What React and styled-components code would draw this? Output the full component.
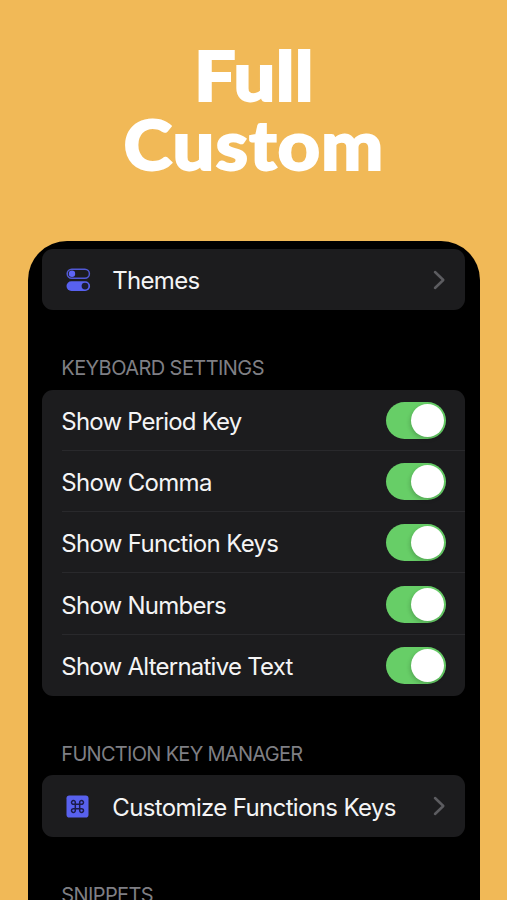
import React from "react";
import styled, { createGlobalStyle } from "styled-components";

const GlobalStyle = createGlobalStyle`
  * {
    box-sizing: border-box;
  }

  body {
    margin: 0;
    background: #f1b957;
  }
`;

const Page = styled.main`
  display: flex;
  flex-direction: column;
  align-items: center;
  height: 900px;
  overflow: hidden;

  background: #f1b957;

  font-family: Inter, "Liberation Sans", sans-serif;
`;

const HeroText = styled.h1`
  flex: none;
  height: 241px;
  margin: 0;
  padding-top: 40px;

  font-family: Lato, sans-serif;
  font-size: 69px;
  font-weight: 900;
  line-height: 69px;
  color: #ffffff;
  text-align: center;
  transform: scaleX(1.07);
  -webkit-text-stroke: 1.8px #ffffff;
`;

const HeroLine = styled.span`
  display: block;
  letter-spacing: ${props => props.$spacing};
`;

const Phone = styled.section`
  flex: none;
  width: 452.6px;
  height: 700px;
  margin-left: 0.6px;
  border-radius: 39px 39px 0 0;
  padding: 8px 14.8px 0;

  background: #000000;
`;

const Card = styled.div`
  border-radius: 11px;

  background: #1c1c1e;
`;

const Row = styled.div`
  display: flex;
  align-items: center;
  height: 61.3px;
  padding: 0 19px;
`;

const SettingRow = styled(Row)`
  &:not(:last-child) {
    background: linear-gradient(#29292c, #29292c) 20px 100% / 100% 1px no-repeat;
  }
`;

const Label = styled.span`
  flex: 1;
  padding-top: 3px;

  font-size: 24px;
  line-height: 30px;
  letter-spacing: ${props => props.$spacing};
  color: #f4f4f5;
  white-space: nowrap;
`;

const SectionTitle = styled.h2`
  height: 79.3px;
  margin: 0;
  padding: 46px 19px 0;

  font-size: 20px;
  font-weight: 400;
  line-height: 24px;
  letter-spacing: ${props => props.$spacing};
  color: #7f7f84;
  white-space: nowrap;
`;

const Switch = styled.span`
  display: flex;
  justify-content: flex-end;
  align-items: center;
  width: 60.5px;
  height: 37px;
  border-radius: 19px;
  padding-right: 2px;

  background: #67ce67;
`;

const Knob = styled.span`
  width: 33px;
  height: 33px;
  border-radius: 50%;

  background: #ffffff;
  box-shadow: -1px 2px 4px rgba(0, 0, 0, 0.18);
`;

const IconSlot = styled.span`
  display: flex;
  align-items: center;
  width: 51px;
  padding-left: 4.4px;
`;

const ThemesIcon = () => (
  <svg width="25" height="24" viewBox="0 0 25 24">
    <rect x="1.2" y="1.2" width="22.2" height="9" rx="4.5" fill="none" stroke="#5159d5" strokeWidth="1.5" />
    <circle cx="6" cy="5.7" r="3.2" fill="#5d65f5" />
    <rect x="0.5" y="13.2" width="23.6" height="9.8" rx="4.9" fill="#5861f0" />
    <circle cx="19" cy="18.1" r="3.4" fill="#1c1c32" />
  </svg>
);

const CommandIcon = () => (
  <svg width="23" height="23" viewBox="0 0 23 23">
    <rect x="0.5" y="0.5" width="22" height="22" rx="2.8" fill="#5861ee" />
    <path
      d="M9.3 9.3H13.7V13.7H9.3ZM9.3 9.3H7.6A1.9 1.9 0 1 1 9.3 7.4ZM13.7 9.3V7.4A1.9 1.9 0 1 1 15.4 9.3ZM13.7 13.7H15.4A1.9 1.9 0 1 1 13.7 15.6ZM9.3 13.7V15.6A1.9 1.9 0 1 1 7.6 13.7Z"
      fill="none"
      stroke="#1c1c4a"
      strokeWidth="1.5"
    />
  </svg>
);

const Chevron = () => (
  <svg width="13" height="20" viewBox="0 0 13 20">
    <path d="M2 2L10.3 10L2 18" fill="none" stroke="#5c5c60" strokeWidth="2.5" strokeLinecap="round" strokeLinejoin="round" />
  </svg>
);

const settings = [
  { label: "Show Period Key", spacing: "-0.82px" },
  { label: "Show Comma", spacing: "-0.7px" },
  { label: "Show Function Keys", spacing: "-0.68px" },
  { label: "Show Numbers", spacing: "-0.75px" },
  { label: "Show Alternative Text", spacing: "-0.76px" }
];

export default function App() {
  return (
    <>
      <GlobalStyle />
      <Page>
        <HeroText>
          <HeroLine $spacing="0.3px">Full</HeroLine>
          <HeroLine $spacing="0.9px">Custom</HeroLine>
        </HeroText>
        <Phone>
          <Card>
            <Row>
              <IconSlot>
                <ThemesIcon />
              </IconSlot>
              <Label $spacing="-0.7px">Themes</Label>
              <Chevron />
            </Row>
          </Card>
          <SectionTitle $spacing="-0.57px">KEYBOARD SETTINGS</SectionTitle>
          <Card>
            {settings.map(({ label, spacing }) => (
              <SettingRow key={label}>
                <Label $spacing={spacing}>{label}</Label>
                <Switch>
                  <Knob />
                </Switch>
              </SettingRow>
            ))}
          </Card>
          <SectionTitle $spacing="-0.7px">FUNCTION KEY MANAGER</SectionTitle>
          <Card>
            <Row>
              <IconSlot>
                <CommandIcon />
              </IconSlot>
              <Label $spacing="-0.64px">Customize Functions Keys</Label>
              <Chevron />
            </Row>
          </Card>
          <SectionTitle $spacing="-0.6px">SNIPPETS</SectionTitle>
        </Phone>
      </Page>
    </>
  );
}
